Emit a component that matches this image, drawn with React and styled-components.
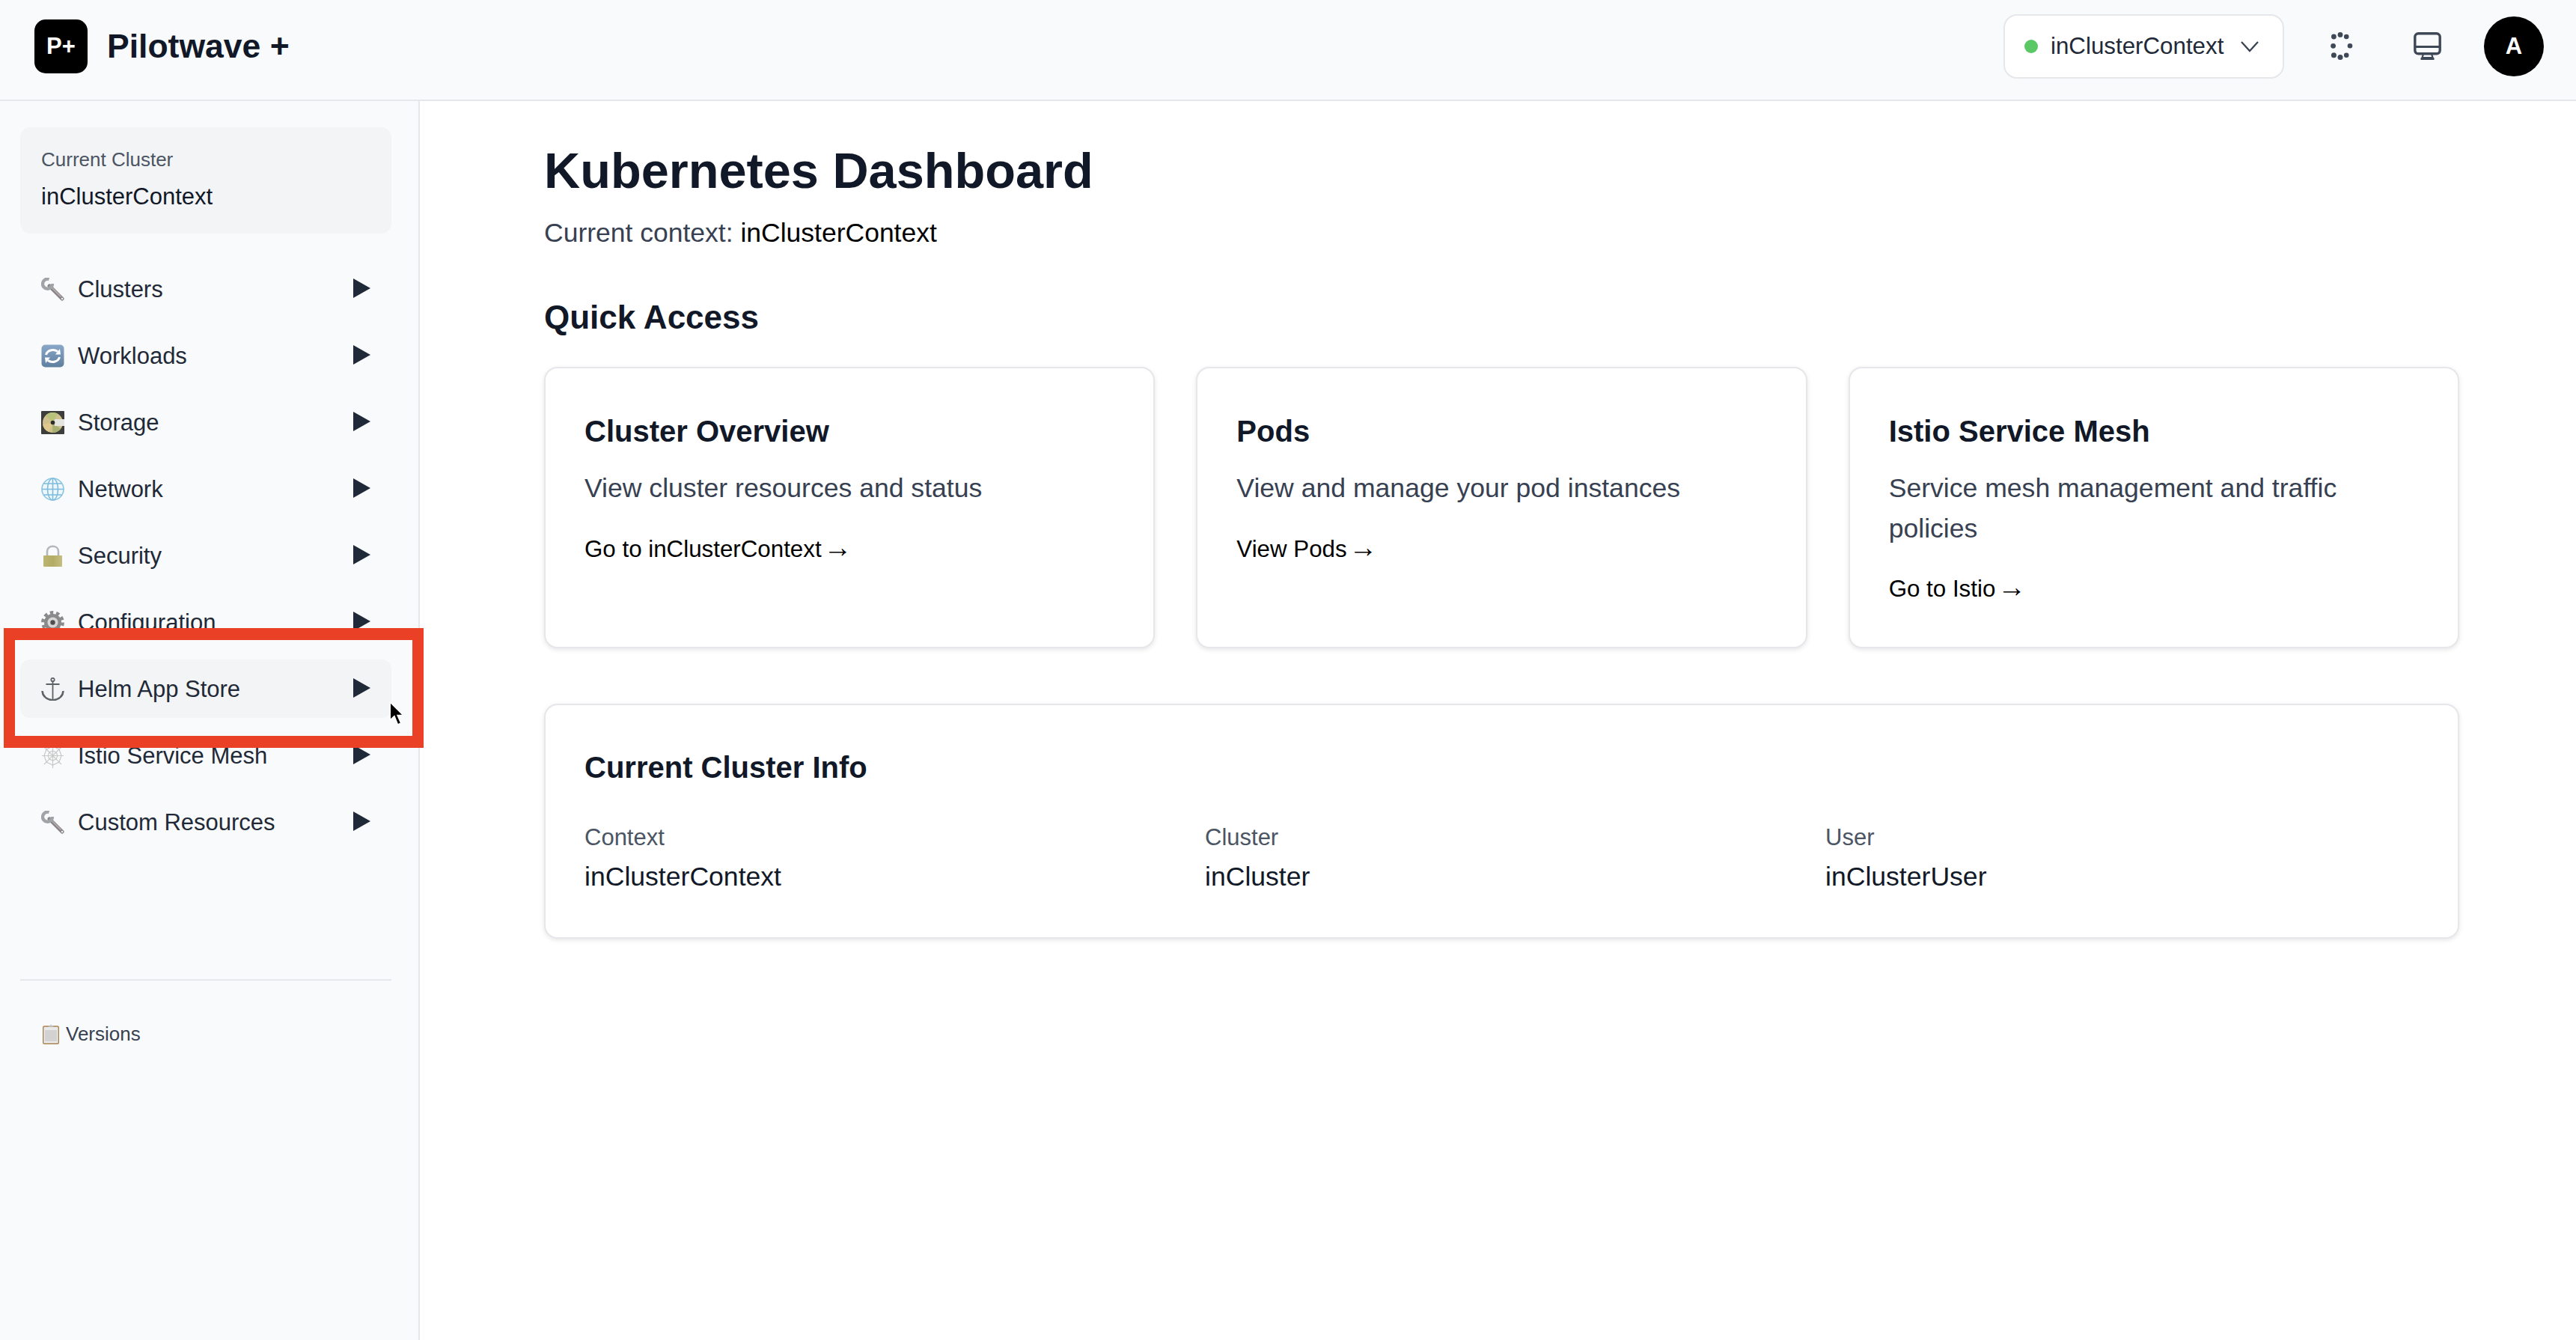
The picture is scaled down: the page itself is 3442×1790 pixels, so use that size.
import React from 'react'
import styled, { createGlobalStyle } from 'styled-components'

const GlobalStyle = createGlobalStyle`
  html, body {
    margin: 0;
    padding: 0;
    background: #fff;
    font-family: "Liberation Sans", Arial, sans-serif;
    color: #111827;
  }
  * { box-sizing: border-box; }
`

const WrenchIcon = () => (
  <svg width="31" height="31" viewBox="0 0 31 31" fill="none">
    <path d="M11 11 L28 28" stroke="#8b8486" strokeWidth="5" strokeLinecap="round" />
    <path d="M12 11 L26 25" stroke="#b7b1b3" strokeWidth="1.6" strokeLinecap="round" />
    <path d="M10.5 2 A6.5 6.5 0 1 0 15 8" stroke="#a0a4a8" strokeWidth="4.4" />
    <circle cx="28" cy="28" r="1.2" fill="#f4f4f4" />
  </svg>
)

const RefreshIcon = () => (
  <svg width="31" height="31" viewBox="0 0 31 31">
    <defs>
      <linearGradient id="refreshFill" x1="0" y1="0" x2="0" y2="1">
        <stop offset="0" stopColor="#8aa7c8" />
        <stop offset="1" stopColor="#5f7f9f" />
      </linearGradient>
    </defs>
    <rect x="0.5" y="0.5" width="30" height="30" rx="5" fill="url(#refreshFill)" />
    <path d="M6.5 14 C8 8 16 5.5 22 9.5" fill="none" stroke="#fff" strokeWidth="3" />
    <path d="M19 13.5 L26 13.5 L25 6 Z" fill="#fff" />
    <path d="M24.5 17 C23 23 15 25.5 9 21.5" fill="none" stroke="#fff" strokeWidth="3" />
    <path d="M12 17.5 L5 17.5 L6 25 Z" fill="#fff" />
  </svg>
)

const DiscIcon = () => (
  <svg width="31" height="31" viewBox="0 0 31 31">
    <rect width="31" height="31" rx="1" fill="#3d3d3b" />
    <circle cx="15.5" cy="15.5" r="13.5" fill="#cfc08e" />
    <path d="M15.5 15.5 L6 6 A13.5 13.5 0 0 1 22 3.5 Z" fill="#b9c27a" />
    <path d="M15.5 15.5 L2 18 A13.5 13.5 0 0 0 10 28 Z" fill="#e0c98c" />
    <path d="M15.5 15.5 L26 24 A13.5 13.5 0 0 1 15 29 Z" fill="#a7b070" />
    <rect x="18" y="11" width="13" height="9" fill="#e4e4e0" />
    <circle cx="15.5" cy="15.5" r="2.8" fill="#2c2c2a" />
  </svg>
)

const GlobeIcon = () => (
  <svg width="31" height="31" viewBox="0 0 31 31" fill="none" stroke="#7dbcdc" strokeWidth="1.6">
    <circle cx="15.5" cy="15.5" r="14.5" stroke="#8cc5e2" fill="#eef7fb" />
    <ellipse cx="15.5" cy="15.5" rx="7" ry="14.5" />
    <path d="M15.5 1 V30 M1 15.5 H30 M3.5 8 H27.5 M3.5 23 H27.5" />
  </svg>
)

const LockIcon = () => (
  <svg width="31" height="31" viewBox="0 0 31 31">
    <defs>
      <linearGradient id="lockFill" x1="0" y1="0" x2="1" y2="0">
        <stop offset="0" stopColor="#bdb673" />
        <stop offset="0.5" stopColor="#b3ac66" />
        <stop offset="1" stopColor="#c4be80" />
      </linearGradient>
    </defs>
    <path d="M8 16 V9.5 C8 0.5 23 0.5 23 9.5 V16" fill="none" stroke="#b4b8bc" strokeWidth="2.6" />
    <rect x="3" y="15" width="25" height="15" rx="1" fill="url(#lockFill)" />
  </svg>
)

const GearIcon = () => (
  <svg width="31" height="31" viewBox="0 0 31 31">
    <circle cx="15.5" cy="15.5" r="13" fill="none" stroke="#8b8b8b" strokeWidth="4.8" strokeDasharray="4.4 3.77" />
    <circle cx="15.5" cy="15.5" r="11.5" fill="#8a8a8a" />
    <circle cx="15.5" cy="15.5" r="7" fill="#d7d7d7" />
    <circle cx="15.5" cy="15.5" r="3.2" fill="#4f4f4f" />
  </svg>
)

const AnchorIcon = () => (
  <svg width="31" height="31" viewBox="0 0 31 31" fill="none" stroke="#5d6266" strokeWidth="1.8">
    <circle cx="15.5" cy="3" r="2.2" />
    <path d="M15.5 5 V30 M6.5 9 H24.5" />
    <path d="M1.5 18 C2 26 9 29.5 15.5 30.5 C22 29.5 29 26 29.5 18" strokeWidth="2.6" />
  </svg>
)

const WebIcon = () => (
  <svg width="31" height="35" viewBox="0 0 31 35" fill="none" stroke="#c9c9c9" strokeWidth="1.2">
    <path d="M15.5 1 V34 M1 17.5 H30 M4 6 L27 29 M27 6 L4 29" />
    <path d="M15.5 5 L24 9 L27 17.5 L24 26 L15.5 30 L7 26 L4 17.5 L7 9 Z" />
    <path d="M15.5 11 L20 13 L22 17.5 L20 22 L15.5 24 L11 22 L9 17.5 L11 13 Z" />
  </svg>
)

const ClipboardIcon = () => (
  <svg width="22" height="27" viewBox="0 0 22 27">
    <rect x="0.7" y="3" width="20.6" height="23.3" rx="1.5" fill="#e9e9e9" stroke="#a98350" strokeWidth="1.4" />
    <rect x="3" y="8" width="16" height="15" fill="#d2d2d2" />
    <path d="M7 3.5 L11 0.5 L15 3.5 Z" fill="#c4c7cb" />
  </svg>
)

const LoadingIcon = () => (
  <svg width="30" height="37" viewBox="0 0 30 37" fill="#3f4856">
    <circle cx="13" cy="3.4" r="3.4" />
    <circle cx="21.2" cy="6" r="3.3" />
    <circle cx="26" cy="18.3" r="3.3" />
    <circle cx="21.2" cy="30.7" r="3.3" />
    <circle cx="13" cy="33.4" r="3.5" />
    <circle cx="4.4" cy="30.7" r="3.5" />
    <circle cx="3.6" cy="18.3" r="3.4" />
    <circle cx="4.4" cy="6" r="3.4" />
  </svg>
)

const MonitorIcon = () => (
  <svg width="37" height="37" viewBox="0 0 37 37">
    <rect x="1.8" y="1.8" width="33.4" height="27" rx="4.5" fill="none" stroke="#3f4856" strokeWidth="3.4" />
    <path d="M2 19.5 H35" stroke="#3f4856" strokeWidth="2.8" />
    <path d="M13 29 H24 L25.5 34 H11.5 Z" fill="none" stroke="#3f4856" strokeWidth="2.2" />
    <path d="M9.5 35.6 H27.5" stroke="#3f4856" strokeWidth="2.8" />
  </svg>
)

const ChevronIcon = () => (
  <svg width="26" height="16" viewBox="0 0 26 16" fill="none" stroke="#374151" strokeWidth="2.2">
    <path d="M2 2 L13 14 L24 2" />
  </svg>
)

const navItems = [
  { label: 'Clusters', Icon: WrenchIcon },
  { label: 'Workloads', Icon: RefreshIcon },
  { label: 'Storage', Icon: DiscIcon },
  { label: 'Network', Icon: GlobeIcon },
  { label: 'Security', Icon: LockIcon },
  { label: 'Configuration', Icon: GearIcon },
  { label: 'Helm App Store', Icon: AnchorIcon, hovered: true },
  { label: 'Istio Service Mesh', Icon: WebIcon },
  { label: 'Custom Resources', Icon: WrenchIcon },
]

const quickLinks = [
  { title: 'Cluster Overview', desc: 'View cluster resources and status', link: 'Go to inClusterContext' },
  { title: 'Pods', desc: 'View and manage your pod instances', link: 'View Pods' },
  { title: 'Istio Service Mesh', desc: 'Service mesh management and traffic policies', link: 'Go to Istio' },
]

const clusterInfo = [
  { label: 'Context', value: 'inClusterContext' },
  { label: 'Cluster', value: 'inCluster' },
  { label: 'User', value: 'inClusterUser' },
]

const App = () => {
  return (
    <Page>
      <GlobalStyle />
      <Header>
        <Brand>
          <LogoBadge>P+</LogoBadge>
          <BrandName>Pilotwave +</BrandName>
        </Brand>
        <HeaderActions>
          <ContextSelect>
            <StatusDot />
            <ContextName>inClusterContext</ContextName>
            <ChevronIcon />
          </ContextSelect>
          <ActionIcon $gap={62}><LoadingIcon /></ActionIcon>
          <ActionIcon $gap={81}><MonitorIcon /></ActionIcon>
          <Avatar>A</Avatar>
        </HeaderActions>
      </Header>

      <Body>
        <Sidebar>
          <ClusterBox>
            <ClusterLabel>Current Cluster</ClusterLabel>
            <ClusterName>inClusterContext</ClusterName>
          </ClusterBox>
          <NavList>
            {navItems.map(({ label, Icon, hovered }) => (
              <NavRow key={label} $hovered={hovered}>
                <Icon />
                <NavLabel>{label}</NavLabel>
                <Caret />
              </NavRow>
            ))}
          </NavList>
          <Divider />
          <VersionsLink>
            <ClipboardIcon />
            <span>Versions</span>
          </VersionsLink>
        </Sidebar>

        <Main>
          <Title>Kubernetes Dashboard</Title>
          <ContextLine>Current context: <strong>inClusterContext</strong></ContextLine>
          <SectionTitle>Quick Access</SectionTitle>
          <CardGrid>
            {quickLinks.map((card) => (
              <Card key={card.title}>
                <CardTitle>{card.title}</CardTitle>
                <CardText>{card.desc}</CardText>
                <CardLink>{card.link} <LinkArrow>→</LinkArrow></CardLink>
              </Card>
            ))}
          </CardGrid>
          <InfoCard>
            <CardTitle>Current Cluster Info</CardTitle>
            <InfoGrid>
              {clusterInfo.map((item) => (
                <div key={item.label}>
                  <InfoLabel>{item.label}</InfoLabel>
                  <InfoValue>{item.value}</InfoValue>
                </div>
              ))}
            </InfoGrid>
          </InfoCard>
        </Main>
      </Body>

      <Annotation />
      <Cursor viewBox="0 0 20 32" width="21" height="33">
        <path d="M2 1 L2 24 L7.5 19 L12 30 L16 28 L11.5 18 L19 18 Z" fill="#000" stroke="#fff" strokeWidth="1.4" />
      </Cursor>
    </Page>
  )
}

const Page = styled.div`
  position: relative;
  width: 3442px;
  height: 1790px;
  overflow: hidden;
  background: #fff;
`
const Header = styled.header`
  display: flex;
  align-items: center;
  justify-content: space-between;
  height: 135px;
  padding: 0 43px 10px 46px;
  background: #f9fafb;
  border-bottom: 2px solid #e5e7eb;
`
const Brand = styled.div`
  display: flex;
  align-items: center;
  gap: 26px;
`
const LogoBadge = styled.div`
  display: flex;
  align-items: center;
  justify-content: center;
  width: 71px;
  height: 72px;
  border-radius: 15px;
  background: #000;
  color: #fff;
  font-size: 31px;
  font-weight: 700;
`
const BrandName = styled.div`
  font-size: 44.5px;
  font-weight: 700;
  color: #111827;
`
const HeaderActions = styled.div`
  display: flex;
  align-items: center;
`
const ContextSelect = styled.div`
  display: flex;
  align-items: center;
  width: 375px;
  height: 86px;
  padding: 0 0 0 26px;
  background: #fff;
  border: 2px solid #e5e7eb;
  border-radius: 18px;
`
const StatusDot = styled.span`
  width: 18px;
  height: 18px;
  border-radius: 50%;
  background: #5ac864;
`
const ContextName = styled.span`
  margin: 0 22px 0 17px;
  font-size: 31.3px;
  color: #1f2937;
`
const ActionIcon = styled.div`
  display: flex;
  justify-content: center;
  margin-left: ${(props) => props.$gap}px;
`
const Avatar = styled.div`
  display: flex;
  align-items: center;
  justify-content: center;
  width: 80px;
  height: 80px;
  margin-left: 57px;
  border-radius: 50%;
  background: #000;
  color: #fff;
  font-size: 31px;
  font-weight: 700;
`
const Body = styled.div`
  display: flex;
  height: 1655px;
`
const Sidebar = styled.aside`
  flex: 0 0 561px;
  padding: 35px 36px 0 27px;
  background: #f9fafb;
  border-right: 2px solid #e5e7eb;
`
const ClusterBox = styled.div`
  height: 142px;
  padding: 26px 28px;
  background: #f3f4f6;
  border-radius: 14px;
`
const ClusterLabel = styled.div`
  font-size: 26px;
  line-height: 34px;
  color: #4b5563;
`
const ClusterName = styled.div`
  margin-top: 13px;
  font-size: 31px;
  line-height: 40px;
  color: #111827;
`
const NavList = styled.nav`
  display: flex;
  flex-direction: column;
  gap: 11px;
  margin-top: 35px;
`
const NavRow = styled.div`
  display: flex;
  align-items: center;
  height: 78px;
  padding: 0 28px;
  border-radius: 13px;
  background: ${(props) => (props.$hovered ? '#f3f4f6' : 'transparent')};
`
const NavLabel = styled.span`
  flex: 1;
  margin-left: 18px;
  padding-top: 2px;
  font-size: 31px;
  color: #1f2937;
`
const Caret = styled.span`
  width: 0;
  height: 0;
  margin-top: -2px;
  border-left: 23px solid #1f2937;
  border-top: 13.5px solid transparent;
  border-bottom: 13.5px solid transparent;
`
const Divider = styled.div`
  height: 2px;
  margin-top: 171px;
  background: #e5e7eb;
`
const VersionsLink = styled.div`
  display: flex;
  align-items: center;
  gap: 9px;
  margin-top: 56px;
  padding-left: 30px;
  font-size: 26px;
  color: #374151;
`
const Main = styled.main`
  flex: 1;
  padding: 53px 156px 0 166px;
`
const Title = styled.h1`
  margin: 0;
  font-size: 66.7px;
  line-height: 80px;
  font-weight: 700;
  color: #111827;
`
const ContextLine = styled.p`
  margin: 19px 0 0;
  font-size: 35.5px;
  line-height: 48px;
  color: #374151;
  strong {
    font-weight: 400;
    color: #000;
  }
`
const SectionTitle = styled.h2`
  margin: 59px 0 0;
  font-size: 44px;
  line-height: 60px;
  font-weight: 700;
  color: #111827;
`
const CardGrid = styled.div`
  display: grid;
  grid-template-columns: repeat(3, 1fr);
  gap: 55px;
  margin-top: 36px;
`
const Card = styled.div`
  height: 376px;
  padding: 59px 52px 0;
  background: #fff;
  border: 2px solid #e5e7eb;
  border-radius: 18px;
  box-shadow: 0 2px 6px rgba(0, 0, 0, 0.1);
`
const CardTitle = styled.h3`
  margin: 0;
  font-size: 40px;
  line-height: 50px;
  font-weight: 700;
  color: #111827;
`
const CardText = styled.p`
  margin: 25px 0 0;
  font-size: 35.6px;
  line-height: 53.5px;
  color: #374151;
`
const CardLink = styled.div`
  margin-top: 32px;
  font-size: 31.3px;
  line-height: 44px;
  color: #000;
`
const LinkArrow = styled.span`
  margin-left: -6px;
  font-size: 38px;
  line-height: 0;
`
const InfoCard = styled.div`
  height: 314px;
  margin-top: 74px;
  padding: 58px 52px 0;
  background: #fff;
  border: 2px solid #e5e7eb;
  border-radius: 18px;
  box-shadow: 0 2px 6px rgba(0, 0, 0, 0.1);
`
const InfoGrid = styled.div`
  display: grid;
  grid-template-columns: repeat(3, 1fr);
  gap: 36px;
  margin-top: 47px;
`
const InfoLabel = styled.div`
  font-size: 31px;
  line-height: 44px;
  color: #4b5563;
`
const InfoValue = styled.div`
  margin-top: 8px;
  font-size: 35.6px;
  line-height: 44px;
  color: #111827;
`
const Annotation = styled.div`
  position: absolute;
  left: 5px;
  top: 839px;
  width: 561px;
  height: 160px;
  border: 15px solid #ea4025;
  border-width: 16px 15px;
`
const Cursor = styled.svg`
  position: absolute;
  left: 519px;
  top: 937px;
`

export default App
